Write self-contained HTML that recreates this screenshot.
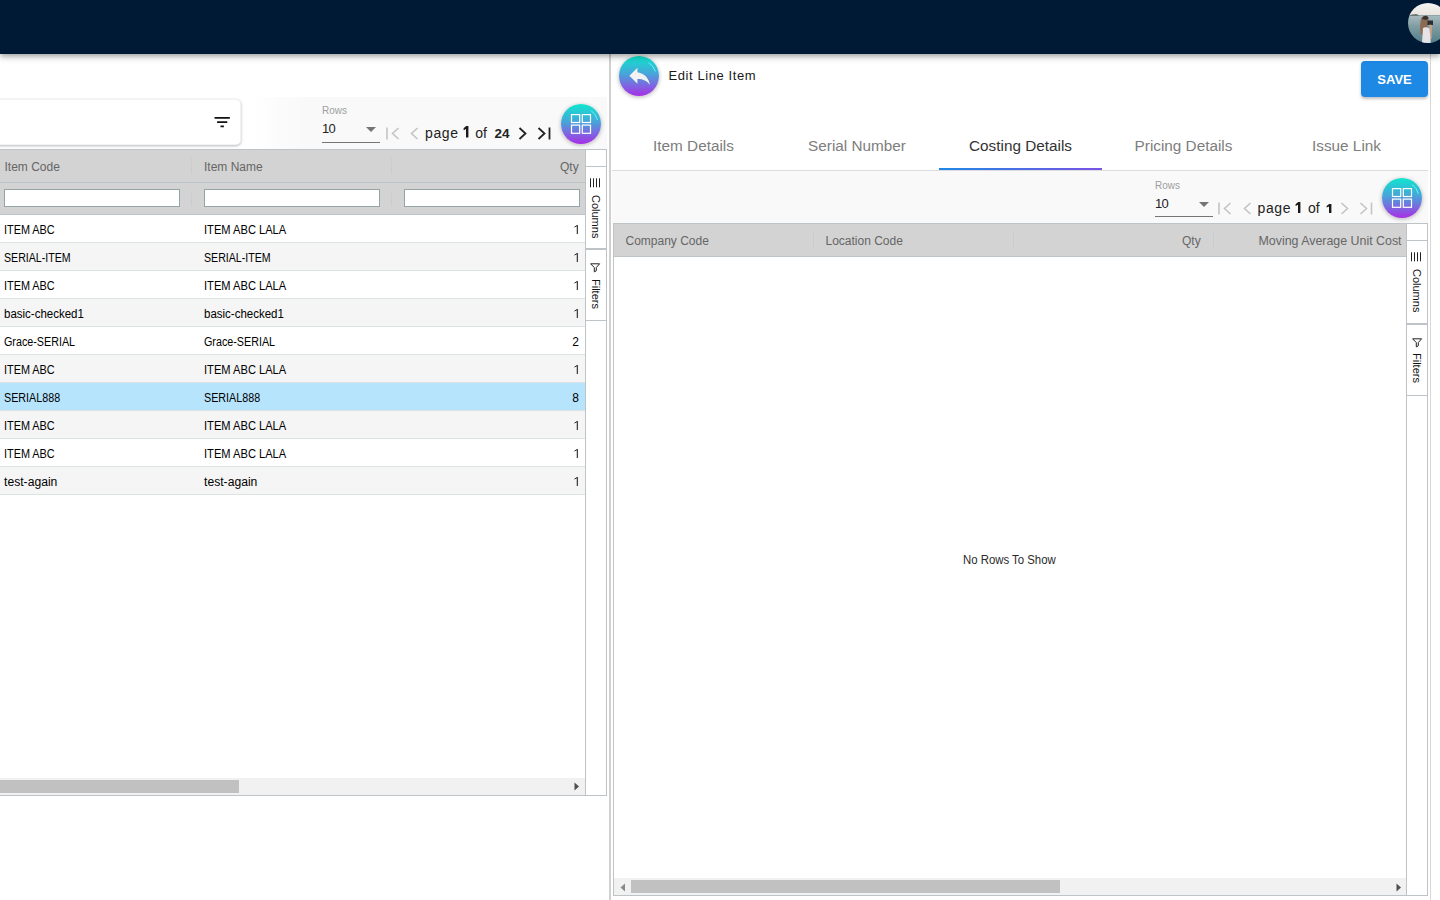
<!DOCTYPE html>
<html><head><meta charset="utf-8">
<style>
*{margin:0;padding:0;box-sizing:border-box;}
html,body{width:1440px;height:900px;overflow:hidden;background:#fff;font-family:"Liberation Sans",sans-serif;position:relative;}
.a{position:absolute;}
.t{position:absolute;white-space:nowrap;line-height:1;}
#topbar{left:0;top:0;width:1440px;height:54px;background:#001a35;box-shadow:0 2px 4px -1px rgba(0,0,0,.2),0 4px 5px 0 rgba(0,0,0,.14),0 1px 10px 0 rgba(0,0,0,.12);z-index:5;}
.hdr{background:#d3d3d3;}
.bl{background:#bdc3c7;}
.row{position:absolute;left:0;width:585px;height:28px;border-bottom:1px solid #dde2e5;}
.cell{position:absolute;font-size:12px;color:#000;line-height:1;white-space:nowrap;top:8.7px;transform-origin:0 0;}
.htxt{font-size:12px;color:#666;}
.inp{position:absolute;height:18px;background:#fff;border:1px solid #95a5a6;top:189px;}
.sep{position:absolute;width:1px;background:#c9cdd0;}
.circ{position:absolute;width:40px;height:40px;border-radius:50%;background:linear-gradient(180deg,#0fe6cf 0%,#47a4d9 45%,#7a6ae0 72%,#a72ee6 100%);box-shadow:0 1px 4px rgba(0,0,0,0.3);overflow:hidden;}
.pg{color:#222;}
</style></head>
<body>
<div id="topbar" class="a"></div>
<!-- avatar -->
<svg class="a" style="left:1408px;top:3px;z-index:6;" width="40" height="40" viewBox="0 0 40 40"><defs><clipPath id="av"><circle cx="20" cy="20" r="20"/></clipPath><linearGradient id="sky" x1="0" y1="0" x2="0" y2="1"><stop offset="0" stop-color="#f6f5f2"/><stop offset="1" stop-color="#e9e4de"/></linearGradient><linearGradient id="sea" x1="0" y1="0" x2="0" y2="1"><stop offset="0" stop-color="#a9bcc0"/><stop offset="0.4" stop-color="#7f9ca2"/><stop offset="1" stop-color="#52808a"/></linearGradient></defs><g clip-path="url(#av)"><rect x="0" y="0" width="40" height="12.2" fill="url(#sky)"/><rect x="0" y="12.2" width="40" height="28" fill="url(#sea)"/><path d="M1.5 12.4 Q4 11.2 6 11.6 Q8.5 10.8 11 12.4 Z" fill="#3f4d47"/><path d="M12.5 31 Q11.5 22 13 16 Q14.5 12.6 18 12.8 Q21 13.4 20.5 17 L19.5 24 Q17 30 14.5 32 Z" fill="#8b6b52"/><path d="M14 16 Q15 12.8 18 12.8 Q20.5 13.2 20.5 15.5 L18 17 Z" fill="#3b332d"/><path d="M19.5 17.5 H25 V22 H19.5 Z" fill="#2b2d30"/><path d="M21.5 21.5 L24 22 L23.5 36 L21.5 35.5 Z" fill="#c8a288"/><path d="M15 25 Q18 23.5 21.5 25.5 L22.8 40 L14 40 Z" fill="#e6e2e6"/></g></svg>

<!-- LEFT PANEL -->
<div class="a" style="left:250px;top:97px;width:357px;height:52px;background:linear-gradient(90deg,rgba(249,249,249,0) 0%,#f9f9f9 15%,#f9f9f9 100%);"></div>
<div class="a" style="left:-10px;top:98.5px;width:251px;height:46.5px;background:#fff;border-radius:5px;border:1px solid rgba(0,0,0,0.05);box-shadow:0 1px 3px rgba(0,0,0,0.28);"></div>
<svg class="a" style="left:211.6px;top:111.6px;" width="20.4" height="20.4" viewBox="0 0 24 24"><path fill="#111" d="M10 18h4v-2h-4v2zM3 6v2h18V6H3zm3 7h12v-2H6v2z"/></svg>

<!-- rows label -->
<div class="t" style="left:322px;top:105.5px;font-size:10px;color:#9e9e9e;">Rows</div>
<div class="t" style="left:322px;top:122px;font-size:13px;color:#222;letter-spacing:-0.8px;">10</div>
<svg class="a" style="left:366px;top:127px;" width="10" height="5"><path d="M0 0h10L5 5z" fill="#757575"/></svg>
<div class="a" style="left:322px;top:142px;width:58px;height:1px;background:#757575;"></div>

<!-- pagination left -->
<svg class="a" style="left:386px;top:127px;" width="14" height="13" viewBox="0 0 14 13"><path d="M1 0.5v12M12.5 1L6.5 6.5l6 5.5" stroke="#c4c4c4" stroke-width="1.6" fill="none"/></svg>
<svg class="a" style="left:410px;top:127px;" width="9" height="13" viewBox="0 0 9 13"><path d="M7.5 1L1.5 6.5l6 5.5" stroke="#c4c4c4" stroke-width="1.6" fill="none"/></svg>
<div class="t pg" style="left:425px;top:126.1px;font-size:14px;letter-spacing:0.6px;">page</div>
<svg class="a" style="left:462.8px;top:126.3px;" width="6" height="11.5" viewBox="0 0 6 11.5"><path d="M0.6 2.30 L3.2 0 H5.4 V11.5 H3.0 V2.99 L0.6 4.14 Z" fill="#1a1a1a"/></svg>
<div class="t pg" style="left:475.3px;top:126.1px;font-size:14px;">of</div>
<div class="t pg" style="left:494.5px;top:126.6px;font-size:13.5px;font-weight:bold;">24</div>
<svg class="a" style="left:518px;top:127px;" width="9" height="13" viewBox="0 0 9 13"><path d="M1.5 1l6 5.5-6 5.5" stroke="#222" stroke-width="1.8" fill="none"/></svg>
<svg class="a" style="left:537px;top:127px;" width="14" height="13" viewBox="0 0 14 13"><path d="M1.5 1l6 5.5-6 5.5M12.5 0.5v12" stroke="#222" stroke-width="1.8" fill="none"/></svg>
<div class="circ" style="left:561px;top:104px;">
  <svg class="a" style="left:0;top:0" width="40" height="40" viewBox="0 0 40 40"><g fill="none" stroke="#fff" stroke-width="1.2"><rect x="10.5" y="10.6" width="8.2" height="7.9"/><rect x="21.3" y="10.6" width="8.2" height="7.9"/><rect x="10.5" y="21.1" width="8.2" height="8.2"/><rect x="21.3" y="21.1" width="8.2" height="8.2"/></g><path d="M30 6.5A17 17 0 0 1 36.5 16" stroke="#6ff0f0" stroke-width="1" fill="none"/></svg>
</div>

<!-- left grid header -->
<div class="a bl" style="left:0;top:149px;width:585px;height:1px;"></div>
<div class="a hdr" style="left:0;top:150px;width:585px;height:32px;"></div>
<div class="a bl" style="left:0;top:182px;width:585px;height:1px;"></div>
<div class="a hdr" style="left:0;top:183px;width:585px;height:31px;"></div>
<div class="a bl" style="left:0;top:214px;width:585px;height:1px;"></div>
<div class="t htxt" style="left:4.5px;top:161px;">Item Code</div>
<div class="t htxt" style="left:204px;top:161px;">Item Name</div>
<div class="t htxt" style="left:560px;top:161px;">Qty</div>
<div class="sep" style="left:191px;top:158px;height:16px;"></div>
<div class="sep" style="left:391px;top:158px;height:16px;"></div>
<div class="sep" style="left:191px;top:191px;height:15px;"></div>
<div class="sep" style="left:391px;top:191px;height:15px;"></div>
<div class="inp" style="left:4px;width:176px;"></div>
<div class="inp" style="left:204px;width:176px;"></div>
<div class="inp" style="left:404px;width:176px;"></div>

<!-- left rows -->
<div id="rows">
<div class="row" style="top:215px;background:#fff;"><div class="cell" style="left:4px;transform:scaleX(0.905);">ITEM ABC</div><div class="cell" style="left:204px;transform:scaleX(0.927);">ITEM ABC LALA</div><svg class="a" style="left:573px;top:10px;" width="6" height="10" viewBox="0 0 6 10"><path d="M4.3 0.2V9.1" stroke="#1a1a1a" stroke-width="1.05"/><path d="M1.5 2.0L4.5 0.4" stroke="#1a1a1a" stroke-width="0.95"/></svg></div>
<div class="row" style="top:243px;background:#f5f5f5;"><div class="cell" style="left:4px;transform:scaleX(0.884);">SERIAL-ITEM</div><div class="cell" style="left:204px;transform:scaleX(0.884);">SERIAL-ITEM</div><svg class="a" style="left:573px;top:10px;" width="6" height="10" viewBox="0 0 6 10"><path d="M4.3 0.2V9.1" stroke="#1a1a1a" stroke-width="1.05"/><path d="M1.5 2.0L4.5 0.4" stroke="#1a1a1a" stroke-width="0.95"/></svg></div>
<div class="row" style="top:271px;background:#fff;"><div class="cell" style="left:4px;transform:scaleX(0.905);">ITEM ABC</div><div class="cell" style="left:204px;transform:scaleX(0.927);">ITEM ABC LALA</div><svg class="a" style="left:573px;top:10px;" width="6" height="10" viewBox="0 0 6 10"><path d="M4.3 0.2V9.1" stroke="#1a1a1a" stroke-width="1.05"/><path d="M1.5 2.0L4.5 0.4" stroke="#1a1a1a" stroke-width="0.95"/></svg></div>
<div class="row" style="top:299px;background:#f5f5f5;"><div class="cell" style="left:4px;transform:scaleX(0.958);">basic-checked1</div><div class="cell" style="left:204px;transform:scaleX(0.958);">basic-checked1</div><svg class="a" style="left:573px;top:10px;" width="6" height="10" viewBox="0 0 6 10"><path d="M4.3 0.2V9.1" stroke="#1a1a1a" stroke-width="1.05"/><path d="M1.5 2.0L4.5 0.4" stroke="#1a1a1a" stroke-width="0.95"/></svg></div>
<div class="row" style="top:327px;background:#fff;"><div class="cell" style="left:4px;transform:scaleX(0.895);">Grace-SERIAL</div><div class="cell" style="left:204px;transform:scaleX(0.895);">Grace-SERIAL</div><div class="cell" style="right:6px;">2</div></div>
<div class="row" style="top:355px;background:#f5f5f5;"><div class="cell" style="left:4px;transform:scaleX(0.905);">ITEM ABC</div><div class="cell" style="left:204px;transform:scaleX(0.927);">ITEM ABC LALA</div><svg class="a" style="left:573px;top:10px;" width="6" height="10" viewBox="0 0 6 10"><path d="M4.3 0.2V9.1" stroke="#1a1a1a" stroke-width="1.05"/><path d="M1.5 2.0L4.5 0.4" stroke="#1a1a1a" stroke-width="0.95"/></svg></div>
<div class="row" style="top:383px;background:#b6e4fd;"><div class="cell" style="left:4px;transform:scaleX(0.895);">SERIAL888</div><div class="cell" style="left:204px;transform:scaleX(0.895);">SERIAL888</div><div class="cell" style="right:6px;">8</div></div>
<div class="row" style="top:411px;background:#f5f5f5;"><div class="cell" style="left:4px;transform:scaleX(0.905);">ITEM ABC</div><div class="cell" style="left:204px;transform:scaleX(0.927);">ITEM ABC LALA</div><svg class="a" style="left:573px;top:10px;" width="6" height="10" viewBox="0 0 6 10"><path d="M4.3 0.2V9.1" stroke="#1a1a1a" stroke-width="1.05"/><path d="M1.5 2.0L4.5 0.4" stroke="#1a1a1a" stroke-width="0.95"/></svg></div>
<div class="row" style="top:439px;background:#fff;"><div class="cell" style="left:4px;transform:scaleX(0.905);">ITEM ABC</div><div class="cell" style="left:204px;transform:scaleX(0.927);">ITEM ABC LALA</div><svg class="a" style="left:573px;top:10px;" width="6" height="10" viewBox="0 0 6 10"><path d="M4.3 0.2V9.1" stroke="#1a1a1a" stroke-width="1.05"/><path d="M1.5 2.0L4.5 0.4" stroke="#1a1a1a" stroke-width="0.95"/></svg></div>
<div class="row" style="top:467px;background:#f5f5f5;"><div class="cell" style="left:4px;transform:scaleX(1.013);">test-again</div><div class="cell" style="left:204px;transform:scaleX(1.013);">test-again</div><svg class="a" style="left:573px;top:10px;" width="6" height="10" viewBox="0 0 6 10"><path d="M4.3 0.2V9.1" stroke="#1a1a1a" stroke-width="1.05"/><path d="M1.5 2.0L4.5 0.4" stroke="#1a1a1a" stroke-width="0.95"/></svg></div>
</div>

<!-- left scrollbar -->
<div class="a" style="left:0;top:778px;width:585px;height:17px;background:#f1f1f1;"></div>
<div class="a" style="left:0;top:780px;width:239px;height:13px;background:#c1c1c1;"></div>
<svg class="a" style="left:574px;top:782px;" width="6" height="9"><path d="M0.5 0.5L5 4.5 0.5 8.5z" fill="#505050"/></svg>
<div class="a bl" style="left:0;top:795px;width:607px;height:1px;"></div>

<!-- left side bar -->
<div class="a" style="left:585px;top:149px;width:22px;height:647px;border:1px solid #bdc3c7;background:#fff;"></div>
<div class="a bl" style="left:586px;top:166px;width:20px;height:1px;"></div>
<div class="a bl" style="left:586px;top:248px;width:20px;height:2px;"></div>
<div class="a bl" style="left:586px;top:320px;width:20px;height:1px;"></div>

<!-- divider -->
<div class="a" style="left:609px;top:54px;width:2px;height:846px;background:#d0d0d0;"></div>

<!-- RIGHT PANEL -->
<div class="a" style="left:1430px;top:54px;width:1px;height:846px;background:#d8d8d8;"></div>
<div class="circ" style="left:619px;top:56px;">
 <svg class="a" style="left:6.6px;top:6.3px" width="27.4" height="27.4" viewBox="0 0 24 24"><path fill="#f2f2f2" d="M10 9V5l-7 7 7 7v-4.1c5 0 8.5 1.6 11 5.1-1-5-4-10-11-11z"/></svg>
 <svg class="a" style="left:0;top:0" width="40" height="40" viewBox="0 0 40 40"><path d="M29.5 6.5A17 17 0 0 1 36.5 15.5" stroke="#6ff0f0" stroke-width="1" fill="none"/></svg>
</div>
<div class="t" style="left:668.4px;top:69px;font-size:13px;letter-spacing:0.6px;color:#1a1a1a;">Edit Line Item</div>
<div class="a" style="left:1361px;top:61px;width:67px;height:36px;background:#1e88e5;border-radius:4px;box-shadow:0 2px 3px rgba(0,0,0,0.25);"></div>
<div class="t" style="left:1361px;width:67px;text-align:center;top:73px;font-size:13px;font-weight:bold;color:#fff;">SAVE</div>

<!-- tabs -->
<div class="t" style="left:612px;width:163px;text-align:center;top:138px;font-size:15.3px;color:#7d7d7d;">Item Details</div>
<div class="t" style="left:775px;width:164px;text-align:center;top:138px;font-size:15.3px;color:#7d7d7d;">Serial Number</div>
<div class="t" style="left:939px;width:163px;text-align:center;top:138px;font-size:15.3px;color:#333;">Costing Details</div>
<div class="t" style="left:1102px;width:163px;text-align:center;top:138px;font-size:15.3px;color:#7d7d7d;">Pricing Details</div>
<div class="t" style="left:1265px;width:163px;text-align:center;top:138px;font-size:15.3px;color:#7d7d7d;">Issue Link</div>
<div class="a" style="left:612px;top:170px;width:816px;height:1px;background:#dcdcdc;"></div>
<div class="a" style="left:939px;top:168px;width:163px;height:2px;background:linear-gradient(90deg,#1e88e5,#7a52e6);"></div>

<!-- right pagination -->
<div class="a" style="left:612px;top:171px;width:816px;height:52px;background:#f9f9f9;"></div>
<div class="t" style="left:1155px;top:181px;font-size:10px;color:#9e9e9e;">Rows</div>
<div class="t" style="left:1155px;top:197px;font-size:13px;color:#222;letter-spacing:-0.8px;">10</div>
<svg class="a" style="left:1199px;top:202px;" width="10" height="5"><path d="M0 0h10L5 5z" fill="#757575"/></svg>
<div class="a" style="left:1155px;top:216px;width:58px;height:1px;background:#757575;"></div>
<svg class="a" style="left:1218px;top:201.5px;" width="14" height="13" viewBox="0 0 14 13"><path d="M1 0.5v12M12.5 1L6.5 6.5l6 5.5" stroke="#c4c4c4" stroke-width="1.6" fill="none"/></svg>
<svg class="a" style="left:1243px;top:201.5px;" width="9" height="13" viewBox="0 0 9 13"><path d="M7.5 1L1.5 6.5l6 5.5" stroke="#c4c4c4" stroke-width="1.6" fill="none"/></svg>
<div class="t pg" style="left:1257.5px;top:201.3px;font-size:14px;letter-spacing:0.6px;">page</div>
<svg class="a" style="left:1295.3px;top:202.2px;" width="6" height="11" viewBox="0 0 6 11"><path d="M0.6 2.20 L3.2 0 H5.4 V11 H3.0 V2.86 L0.6 3.96 Z" fill="#1a1a1a"/></svg>
<div class="t pg" style="left:1308px;top:201.3px;font-size:14px;">of</div>
<svg class="a" style="left:1326.2px;top:203.5px;" width="6" height="9.6" viewBox="0 0 6 9.6"><path d="M0.6 1.92 L3.2 0 H5.4 V9.6 H3.0 V2.50 L0.6 3.46 Z" fill="#1a1a1a"/></svg>
<svg class="a" style="left:1340px;top:201.5px;" width="9" height="13" viewBox="0 0 9 13"><path d="M1.5 1l6 5.5-6 5.5" stroke="#c4c4c4" stroke-width="1.6" fill="none"/></svg>
<svg class="a" style="left:1359px;top:201.5px;" width="14" height="13" viewBox="0 0 14 13"><path d="M1.5 1l6 5.5-6 5.5M12.5 0.5v12" stroke="#c4c4c4" stroke-width="1.6" fill="none"/></svg>
<div class="circ" style="left:1382px;top:177.5px;">
  <svg class="a" style="left:0;top:0" width="40" height="40" viewBox="0 0 40 40"><g fill="none" stroke="#fff" stroke-width="1.2"><rect x="10.5" y="10.6" width="8.2" height="7.9"/><rect x="21.3" y="10.6" width="8.2" height="7.9"/><rect x="10.5" y="21.1" width="8.2" height="8.2"/><rect x="21.3" y="21.1" width="8.2" height="8.2"/></g><path d="M30 6.5A17 17 0 0 1 36.5 16" stroke="#6ff0f0" stroke-width="1" fill="none"/></svg>
</div>

<!-- right grid -->
<div class="a" style="left:613px;top:223px;width:815px;height:673px;border:1px solid #bdc3c7;background:#fff;"></div>
<div class="a hdr" style="left:614px;top:224px;width:792px;height:32px;"></div>
<div class="a bl" style="left:614px;top:256px;width:792px;height:1px;"></div>
<div class="t htxt" style="left:625.5px;top:235px;">Company Code</div>
<div class="t htxt" style="left:825.5px;top:235px;">Location Code</div>
<div class="t htxt" style="left:1182px;top:235px;">Qty</div>
<div class="t htxt" style="left:1258.5px;top:234.8px;font-size:12.4px;">Moving Average Unit Cost</div>
<div class="sep" style="left:813px;top:232px;height:16px;"></div>
<div class="sep" style="left:1013px;top:232px;height:16px;"></div>
<div class="sep" style="left:1213px;top:232px;height:16px;"></div>
<div class="t" style="left:963px;top:553.6px;font-size:12px;color:#2a2a2a;transform:scaleX(0.948);transform-origin:0 0;">No Rows To Show</div>
<!-- right scrollbar -->
<div class="a" style="left:614px;top:878px;width:792px;height:17px;background:#f1f1f1;"></div>
<div class="a" style="left:631px;top:880px;width:429px;height:13px;background:#c1c1c1;"></div>
<svg class="a" style="left:619.5px;top:882.5px;" width="6" height="9"><path d="M5 0.5L0.5 4.5 5 8.5z" fill="#8a8a8a"/></svg>
<svg class="a" style="left:1395.5px;top:882.5px;" width="6" height="9"><path d="M0.5 0.5L5 4.5 0.5 8.5z" fill="#505050"/></svg>
<!-- right side bar -->
<div class="a bl" style="left:1406px;top:224px;width:1px;height:671px;"></div>
<div class="a bl" style="left:1407px;top:240px;width:20px;height:1px;"></div>
<div class="a bl" style="left:1407px;top:323px;width:20px;height:2px;"></div>
<div class="a bl" style="left:1407px;top:395px;width:20px;height:1px;"></div>

<!-- left sidebar labels -->
<svg class="a" style="left:590px;top:178px;" width="11" height="10" viewBox="0 0 11 10"><g stroke="#222" stroke-width="1"><path d="M0.5 0.3v9M3.5 0.3v9M6.5 0.3v9M9.5 0.3v9"/></g></svg>
<div class="t" style="left:589.5px;top:195px;font-size:11px;color:#111;writing-mode:vertical-rl;">Columns</div>
<svg class="a" style="left:590px;top:262.5px;" width="11" height="10" viewBox="0 0 11 10"><path d="M0.6 0.8H9.6L6.3 4.6V7.8L4.3 8.9V4.6Z" fill="none" stroke="#222" stroke-width="1" stroke-linejoin="round"/></svg>
<div class="t" style="left:589.5px;top:279px;font-size:11px;color:#111;writing-mode:vertical-rl;">Filters</div>
<!-- right sidebar labels -->
<svg class="a" style="left:1411px;top:252px;" width="11" height="10" viewBox="0 0 11 10"><g stroke="#222" stroke-width="1"><path d="M0.5 0.3v9M3.5 0.3v9M6.5 0.3v9M9.5 0.3v9"/></g></svg>
<div class="t" style="left:1410.5px;top:269px;font-size:11px;color:#111;writing-mode:vertical-rl;">Columns</div>
<svg class="a" style="left:1411.5px;top:338px;" width="11" height="10" viewBox="0 0 11 10"><path d="M0.6 0.8H9.6L6.3 4.6V7.8L4.3 8.9V4.6Z" fill="none" stroke="#222" stroke-width="1" stroke-linejoin="round"/></svg>
<div class="t" style="left:1410.5px;top:353px;font-size:11px;color:#111;writing-mode:vertical-rl;">Filters</div>
</body></html>
